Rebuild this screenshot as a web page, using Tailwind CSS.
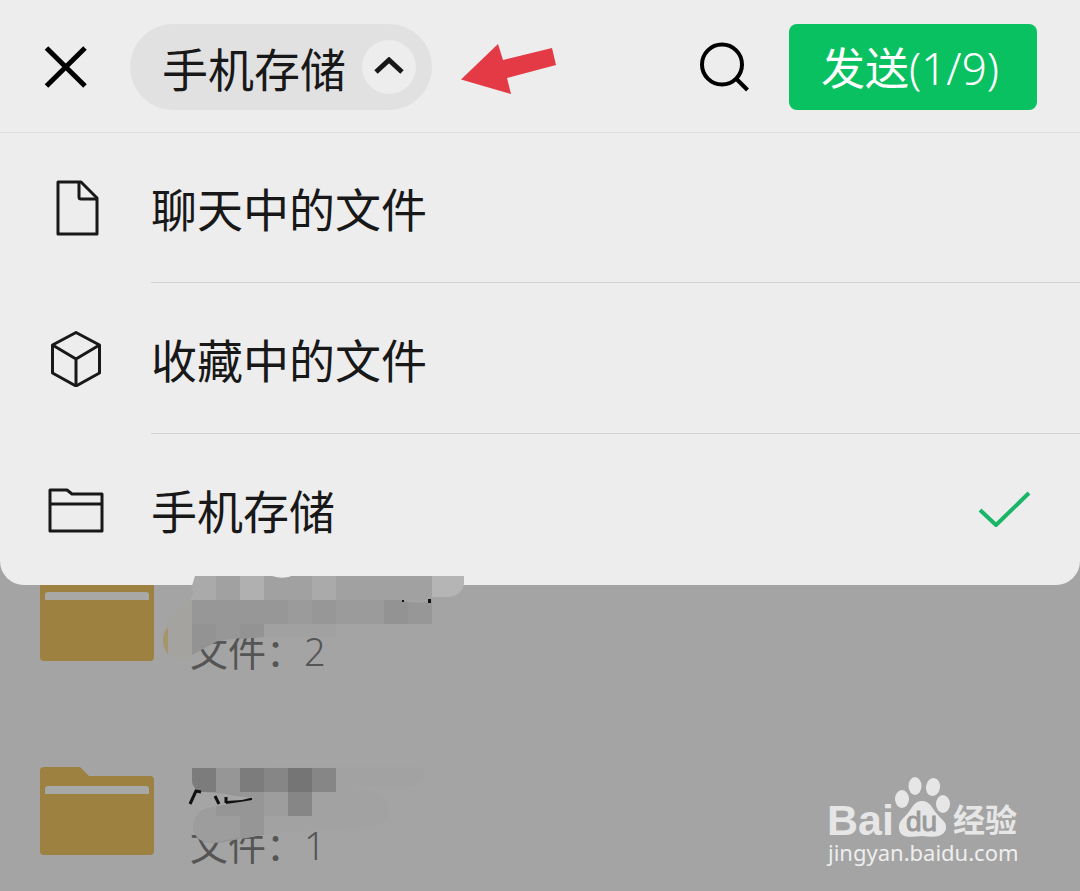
<!DOCTYPE html>
<html lang="zh-CN">
<head>
    <meta charset="UTF-8">
    <meta name="viewport" content="width=device-width, initial-scale=1.0">
    <title>手机存储</title>
    <script src="https://cdn.jsdelivr.net/npm/@tailwindcss/browser@4"></script>
</head>
<body class="relative min-h-screen overflow-x-hidden bg-[#a4a4a4] font-['Noto_Sans_CJK_SC',sans-serif] text-[#181818]">
    <div class="relative z-10 rounded-b-3xl bg-[#ededed]">
        <!-- Header -->
        <header class="flex items-center border-b border-[#e0e0e0] pt-6 pb-[22px] pr-[43px] pl-11">
            <button type="button" aria-label="关闭" class="shrink-0">
                <svg class="size-11" viewBox="0 0 44 44" fill="none" stroke="#000" stroke-width="5"><path d="M2.500 3 41 41M41 3 2.500 41"/></svg>
            </button>
            <button type="button" aria-expanded="true" class="ml-[42px] flex h-[86px] shrink-0 items-center gap-4 rounded-full bg-[#e1e1e1] pr-4 pl-8 text-[46px] leading-none">
                手机存储
                <span class="flex size-[54px] items-center justify-center rounded-full bg-[#ededed]">
                    <svg class="h-5 w-8" viewBox="0 0 32 20" fill="none" stroke="#181818" stroke-width="5"><path d="M3 15 16 3 29 15"/></svg>
                </span>
            </button>
            <svg class="ml-7 h-14 w-24 shrink-0" viewBox="0 0 96 56" fill="#e43a46"><path d="M1 40.500 38 5 43 21 92 9 96 26 47 39 51 55Z"/></svg>
            <button type="button" aria-label="搜索" class="ml-auto shrink-0">
                <svg class="size-[50px]" viewBox="0 0 50 50" fill="none" stroke="#000" stroke-width="4"><circle cx="22" cy="22.500" r="20"/><path d="M36 36.500 47.500 48"/></svg>
            </button>
            <button type="button" class="ml-[39px] h-[86px] shrink-0 rounded-lg bg-[#09c160] pr-[38px] pl-8 text-[44px] leading-none text-white">发送<span class="font-['Noto_Sans',sans-serif] font-light">(1/9)</span></button>
        </header>

        <!-- Source menu -->
        <nav>
            <button type="button" class="flex w-full items-center pl-12 text-left">
                <svg class="size-14 shrink-0" viewBox="0 0 56 56" fill="none" stroke="#181818" stroke-width="3" stroke-linejoin="round"><path d="M10 2H33L49 18V54H10Z"/><path d="M31 2V17Q31 19 33 19H49"/></svg>
                <span class="ml-[47px] flex h-[150px] flex-1 items-center border-b border-[#d2d2d2] text-[46px]">聊天中的文件</span>
            </button>
            <button type="button" class="flex w-full items-center pl-12 text-left">
                <svg class="size-14 shrink-0" viewBox="0 0 56 56" fill="none" stroke="#181818" stroke-width="3" stroke-linejoin="round"><path d="M28 1.500 51.500 14V42L28 55 4.500 42V14Z"/><path d="M4.500 14 28 28 51.500 14M28 28V55"/></svg>
                <span class="ml-[47px] flex h-[151px] flex-1 items-center border-b border-[#d2d2d2] text-[46px]">收藏中的文件</span>
            </button>
            <button type="button" aria-current="true" class="flex w-full items-center pr-12 pl-12 text-left">
                <svg class="size-14 shrink-0" viewBox="0 0 56 56" fill="none" stroke="#181818" stroke-width="3" stroke-linejoin="round"><path d="M2 8H19L24 12H54V49H2ZM2 22H54"/></svg>
                <span class="ml-[47px] flex h-[151px] flex-1 items-center text-[46px]">手机存储</span>
                <svg class="h-10 w-14 shrink-0" viewBox="0 0 56 40" fill="none" stroke="#1ab667" stroke-width="4" stroke-linejoin="round"><path d="M4 20 20 35 53 3"/></svg>
            </button>
        </nav>
    </div>

    <!-- Folder list -->
    <main class="-mt-3">
        <a href="#" class="relative flex h-[194px] items-start gap-9 pl-10">
            <svg class="h-[88px] w-[114px] shrink-0" viewBox="0 0 114 88"><path fill="#9c8140" d="M4 0H40L49 9H110Q114 9 114 13V84Q114 88 110 88H4Q0 88 0 84V4Q0 0 4 0Z"/><path fill="#a8a8a6" d="M5 27V22Q5 19 8 19H106Q109 19 109 22V27Z"/></svg>
            <span class="mt-[50px] text-[38px] leading-[54px] text-[#555]">文件：<span class="font-['Noto_Sans',sans-serif] font-light">2</span></span>
            <svg class="absolute top-0 left-40 z-20 h-[90px] w-[310px]" viewBox="0 0 310 90">
                <path fill="#a4a39f" d="M32 24C18 42 2 49 2 68Q4 82 22 86L32 86Z"/>
                <path fill="#a69568" d="M8 54Q-2 66 8 82Z"/>
                <path fill="#b5b5b5" d="M272 3H304V10Q302 23 288 24H272Z"/>
                <path fill="#aaa" d="M35 3H272V27H30L34 19 31 16Z"/>
                <path fill="#a1a1a1" d="M56 3H80V27H56ZM104 3H152V27H104ZM176 3H272V27H176Z"/>
                <path fill="#b0b0b0" d="M80 3H104V27H80Z"/>
                <path fill="#979797" d="M32 27H272V51H104V64Q61 65 45 72L32 82Z"/>
                <path fill="#939393" d="M32 51H56V69L32 82ZM80 51H104V64L80 66ZM224 27H248V51H224Z"/>
                <path fill="#9b9b9b" d="M128 27H152V51H128ZM176 27H224V51H176Z"/>
                <path fill="#a1a1a1" d="M104 51H176V64H104Z"/>
                <path fill="#ededed" d="M112 2H134Q124 7 112 3Z"/>
                <path fill="#a3a3a3" d="M240 27H270V29Q250 31 240 27Z"/>
                <path fill="#111" d="M268 26H271V30H268ZM242 27H244V29H242Z"/>
            </svg>
        </a>
        <a href="#" class="relative flex items-start gap-9 pl-10">
            <svg class="h-[88px] w-[114px] shrink-0" viewBox="0 0 114 88"><path fill="#9c8140" d="M4 0H40L49 9H110Q114 9 114 13V84Q114 88 110 88H4Q0 88 0 84V4Q0 0 4 0Z"/><path fill="#a8a8a6" d="M5 27V22Q5 19 8 19H106Q109 19 109 22V27Z"/></svg>
            <span class="mt-[50px] text-[38px] leading-[54px] text-[#555]">文件：<span class="font-['Noto_Sans',sans-serif] font-light">1</span></span>
            <svg class="absolute top-0 left-[180px] h-[90px] w-[250px]" viewBox="0 0 250 90">
                <path fill="#a2a2a2" d="M60 6Q150 -12 215 -12 244 -9 244 7 241 20 220 20H165Q209 21 209 43 208 60 185 61L95 66 60 72Z"/>
                <path fill="#969696" d="M12 1H156V25H132V49H84V68Q65 70 50 74 13 82 13 58 16 41 37 39L72 33 47 27 22 25Q12 22 12 13Z"/>
                <path fill="#9d9d9d" d="M36 49V75Q13 76 13 58 16 42 36 39ZM36 49H60V70L36 75ZM84 25H108V49H84Z"/>
                <path fill="#7c7c7c" d="M12 1H36V25H22Q12 22 12 13ZM60 1H84V25H60Z"/>
                <path fill="#757575" d="M108 1H132V25H108Z"/>
                <path fill="#868686" d="M84 1H108V25H84ZM132 1H156V25H132ZM108 25H132V49H108Z"/>
                <path fill="#a5a5a5" d="M22 25 72 31 70 32 37 39 12 45Z"/>
                <path fill="none" stroke="#111" stroke-width="3" d="M10 37 16 24 21 25M35 29 39 37M46 30V36"/>
                <path fill="#111" d="M46 34 62 33 70 31H72V33L60 35 46 37Z"/>
            </svg>
        </a>
    </main>

    <!-- Watermark -->
    <svg class="absolute right-14 bottom-5 h-[100px] w-[200px]" viewBox="0 0 200 100" fill="#e6e6e6" role="img" aria-label="Baidu经验">
        <text x="3" y="64" font-family="Liberation Sans" font-size="43" font-weight="bold">Bai</text>
        <ellipse cx="78" cy="28" rx="7" ry="9"/>
        <ellipse cx="91" cy="15" rx="6.500" ry="9"/>
        <ellipse cx="109" cy="16" rx="7" ry="9" transform="rotate(10 109 16)"/>
        <ellipse cx="119" cy="33" rx="7" ry="9"/>
        <path d="M98 30C106 30 108 37 113 43S123 51 122 58C119 67 110 66 98 65 86 66 77 68 75 58 74 50 80 47 84 42S90 30 98 30Z"/>
        <text x="82" y="60" font-family="Liberation Sans" font-size="28" fill="#9a9a9a" stroke="#9a9a9a">du</text>
        <text x="129" y="61" font-family="Noto Sans CJK SC" font-size="32" font-weight="bold">经验</text>
        <text x="4" y="90" font-family="Noto Sans" font-size="22" fill="#eee">jingyan.baidu.com</text>
    </svg>
</body>
</html>
